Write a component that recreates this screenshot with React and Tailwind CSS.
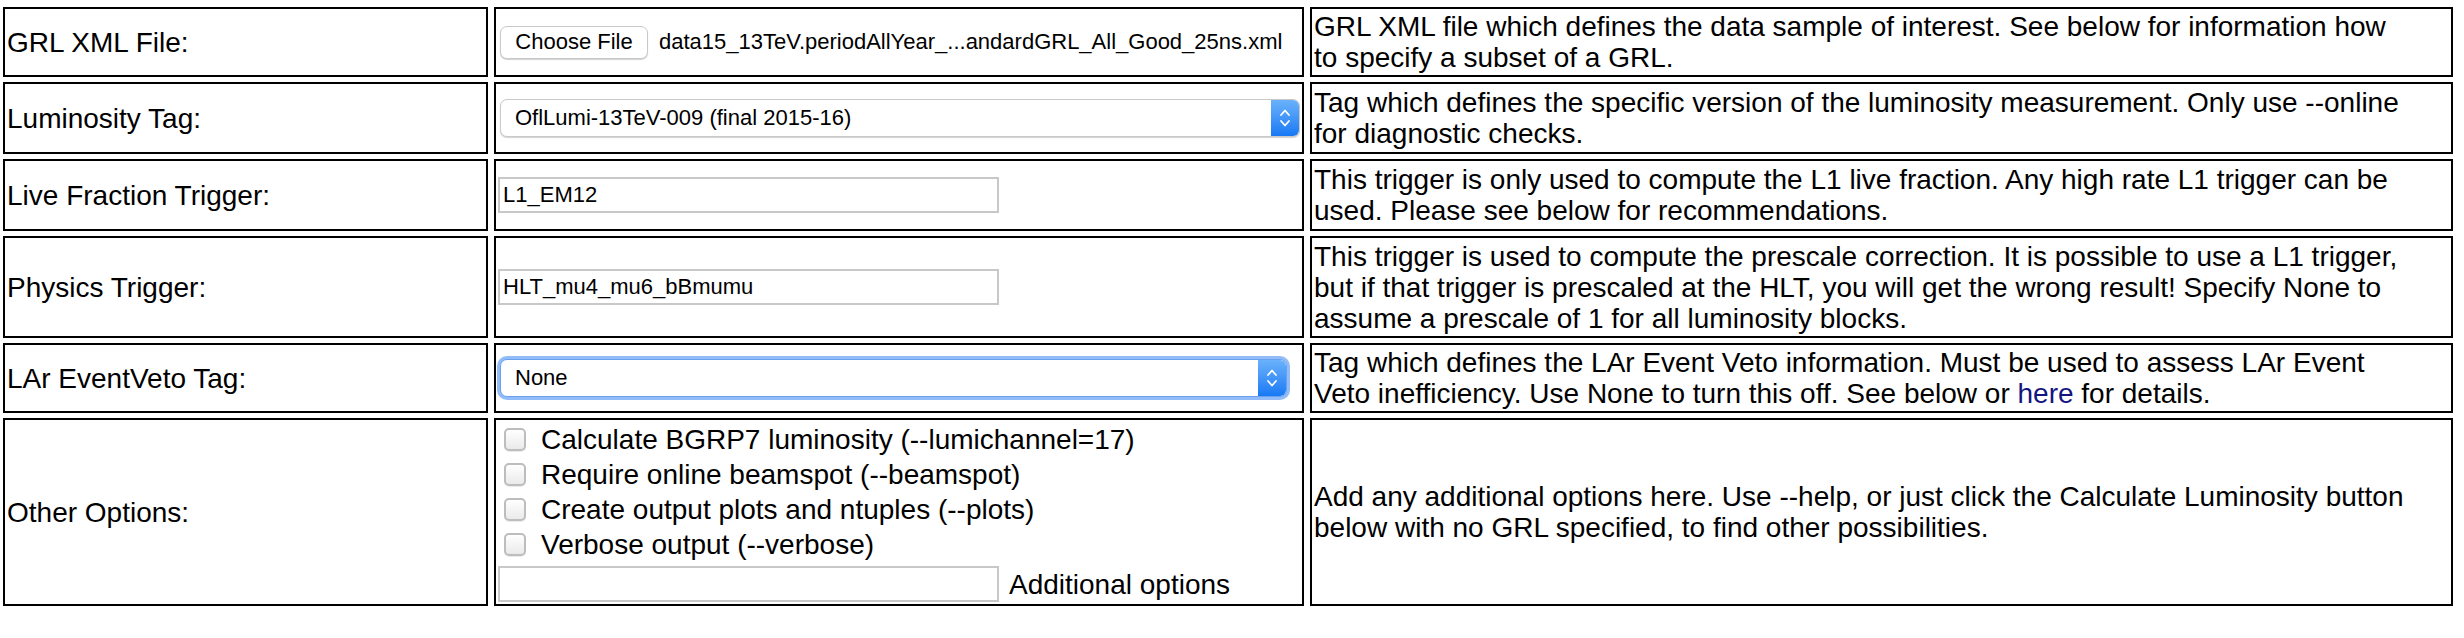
import React from "react";

function Chevrons() {
  return (
    <svg width="12" height="22" viewBox="0 0 12 22" fill="none">
      <path d="M2 8 L6 3.5 L10 8" stroke="white" strokeWidth="1.8" strokeLinecap="round" strokeLinejoin="round" />
      <path d="M2 14 L6 18.5 L10 14" stroke="white" strokeWidth="1.8" strokeLinecap="round" strokeLinejoin="round" />
    </svg>
  );
}

function Select({ value, width, focused }) {
  return (
    <div
      className={
        "ml-[2px] h-[38px] rounded-[7px] bg-white flex items-center overflow-hidden " +
        (focused
          ? "border border-[#6aa1ef] shadow-[0_0_0_3px_rgba(110,165,245,0.75)]"
          : "border border-[#c9c9c9] shadow-[0_1px_1px_rgba(0,0,0,0.18)]")
      }
      style={{ width }}
    >
      <span className="flex-1 pl-[14px] text-[22px] leading-[26px] whitespace-nowrap">{value}</span>
      <div className="w-[28px] h-full bg-gradient-to-b from-[#69b1fb] to-[#1579f4] flex items-center justify-center">
        <Chevrons />
      </div>
    </div>
  );
}

function TextInput({ value }) {
  return (
    <div className="w-[501px] h-[36px] border-2 border-[#c8c8c8] bg-white flex items-center pl-[3px] text-[22px] leading-[26px] whitespace-nowrap">
      {value}
    </div>
  );
}

function Checkbox({ label }) {
  return (
    <div className="h-[35px] flex items-center">
      <div className="ml-[6px] w-[22px] h-[23px] rounded-[5px] border-2 border-[#bdbdbd] bg-gradient-to-b from-white to-[#eaeaea] shadow-[0_1px_0_rgba(0,0,0,0.08)]" />
      <span className="ml-[15px] whitespace-nowrap">{label}</span>
    </div>
  );
}

function Label({ children }) {
  return <div className="border-2 border-black px-[2px] flex items-center whitespace-nowrap">{children}</div>;
}

function Mid({ children, className = "" }) {
  return <div className={"border-2 border-black p-[2px] flex items-center " + className}>{children}</div>;
}

function Desc({ lines }) {
  return (
    <div className="border-2 border-black px-[2px] flex items-center">
      <div className="whitespace-nowrap">
        {lines.map((l, i) => (
          <div key={i}>{l}</div>
        ))}
      </div>
    </div>
  );
}

export default function App() {
  return (
    <div className="w-[2464px] h-[638px] bg-white text-black text-[28px] leading-[31px] font-['Liberation_Sans',Arial,Helvetica,sans-serif] overflow-hidden">
      <div className="grid grid-cols-[485px_810px_1143px] grid-rows-[70px_72px_72px_102px_70px_188px] gap-x-[6px] gap-y-[5px] pl-[3px] pt-[7px]">
        <Label>GRL XML File:</Label>
        <Mid>
          <div className="flex items-center">
            <div className="ml-[2px] h-[33px] w-[148px] rounded-[7px] border border-[#c9c9c9] bg-white shadow-[0_1px_1px_rgba(0,0,0,0.18)] flex items-center justify-center text-[22px] leading-[26px]">
              Choose File
            </div>
            <span className="ml-[11px] text-[22px] leading-[26px] whitespace-nowrap">
              data15_13TeV.periodAllYear_...andardGRL_All_Good_25ns.xml
            </span>
          </div>
        </Mid>
        <Desc
          lines={[
            "GRL XML file which defines the data sample of interest. See below for information how",
            "to specify a subset of a GRL.",
          ]}
        />

        <Label>Luminosity Tag:</Label>
        <Mid>
          <Select value="OflLumi-13TeV-009 (final 2015-16)" width={802} />
        </Mid>
        <Desc
          lines={[
            "Tag which defines the specific version of the luminosity measurement. Only use --online",
            "for diagnostic checks.",
          ]}
        />

        <Label>Live Fraction Trigger:</Label>
        <Mid>
          <TextInput value="L1_EM12" />
        </Mid>
        <Desc
          lines={[
            "This trigger is only used to compute the L1 live fraction. Any high rate L1 trigger can be",
            "used. Please see below for recommendations.",
          ]}
        />

        <Label>Physics Trigger:</Label>
        <Mid>
          <TextInput value="HLT_mu4_mu6_bBmumu" />
        </Mid>
        <Desc
          lines={[
            "This trigger is used to compute the prescale correction. It is possible to use a L1 trigger,",
            "but if that trigger is prescaled at the HLT, you will get the wrong result! Specify None to",
            "assume a prescale of 1 for all luminosity blocks.",
          ]}
        />

        <Label>LAr EventVeto Tag:</Label>
        <Mid>
          <Select value="None" width={787} focused />
        </Mid>
        <Desc
          lines={[
            "Tag which defines the LAr Event Veto information. Must be used to assess LAr Event",
            <span key="x">
              Veto inefficiency. Use None to turn this off. See below or{" "}
              <a className="text-[#15157f]">here</a> for details.
            </span>,
          ]}
        />

        <Label>Other Options:</Label>
        <div className="border-2 border-black p-[2px] flex flex-col justify-center">
          <Checkbox label="Calculate BGRP7 luminosity (--lumichannel=17)" />
          <Checkbox label="Require online beamspot (--beamspot)" />
          <Checkbox label="Create output plots and ntuples (--plots)" />
          <Checkbox label="Verbose output (--verbose)" />
          <div className="mt-[4px] flex items-center">
            <TextInput value="" />
            <span className="ml-[10px] whitespace-nowrap">Additional options</span>
          </div>
        </div>
        <Desc
          lines={[
            "Add any additional options here. Use --help, or just click the Calculate Luminosity button",
            "below with no GRL specified, to find other possibilities.",
          ]}
        />
      </div>
    </div>
  );
}
